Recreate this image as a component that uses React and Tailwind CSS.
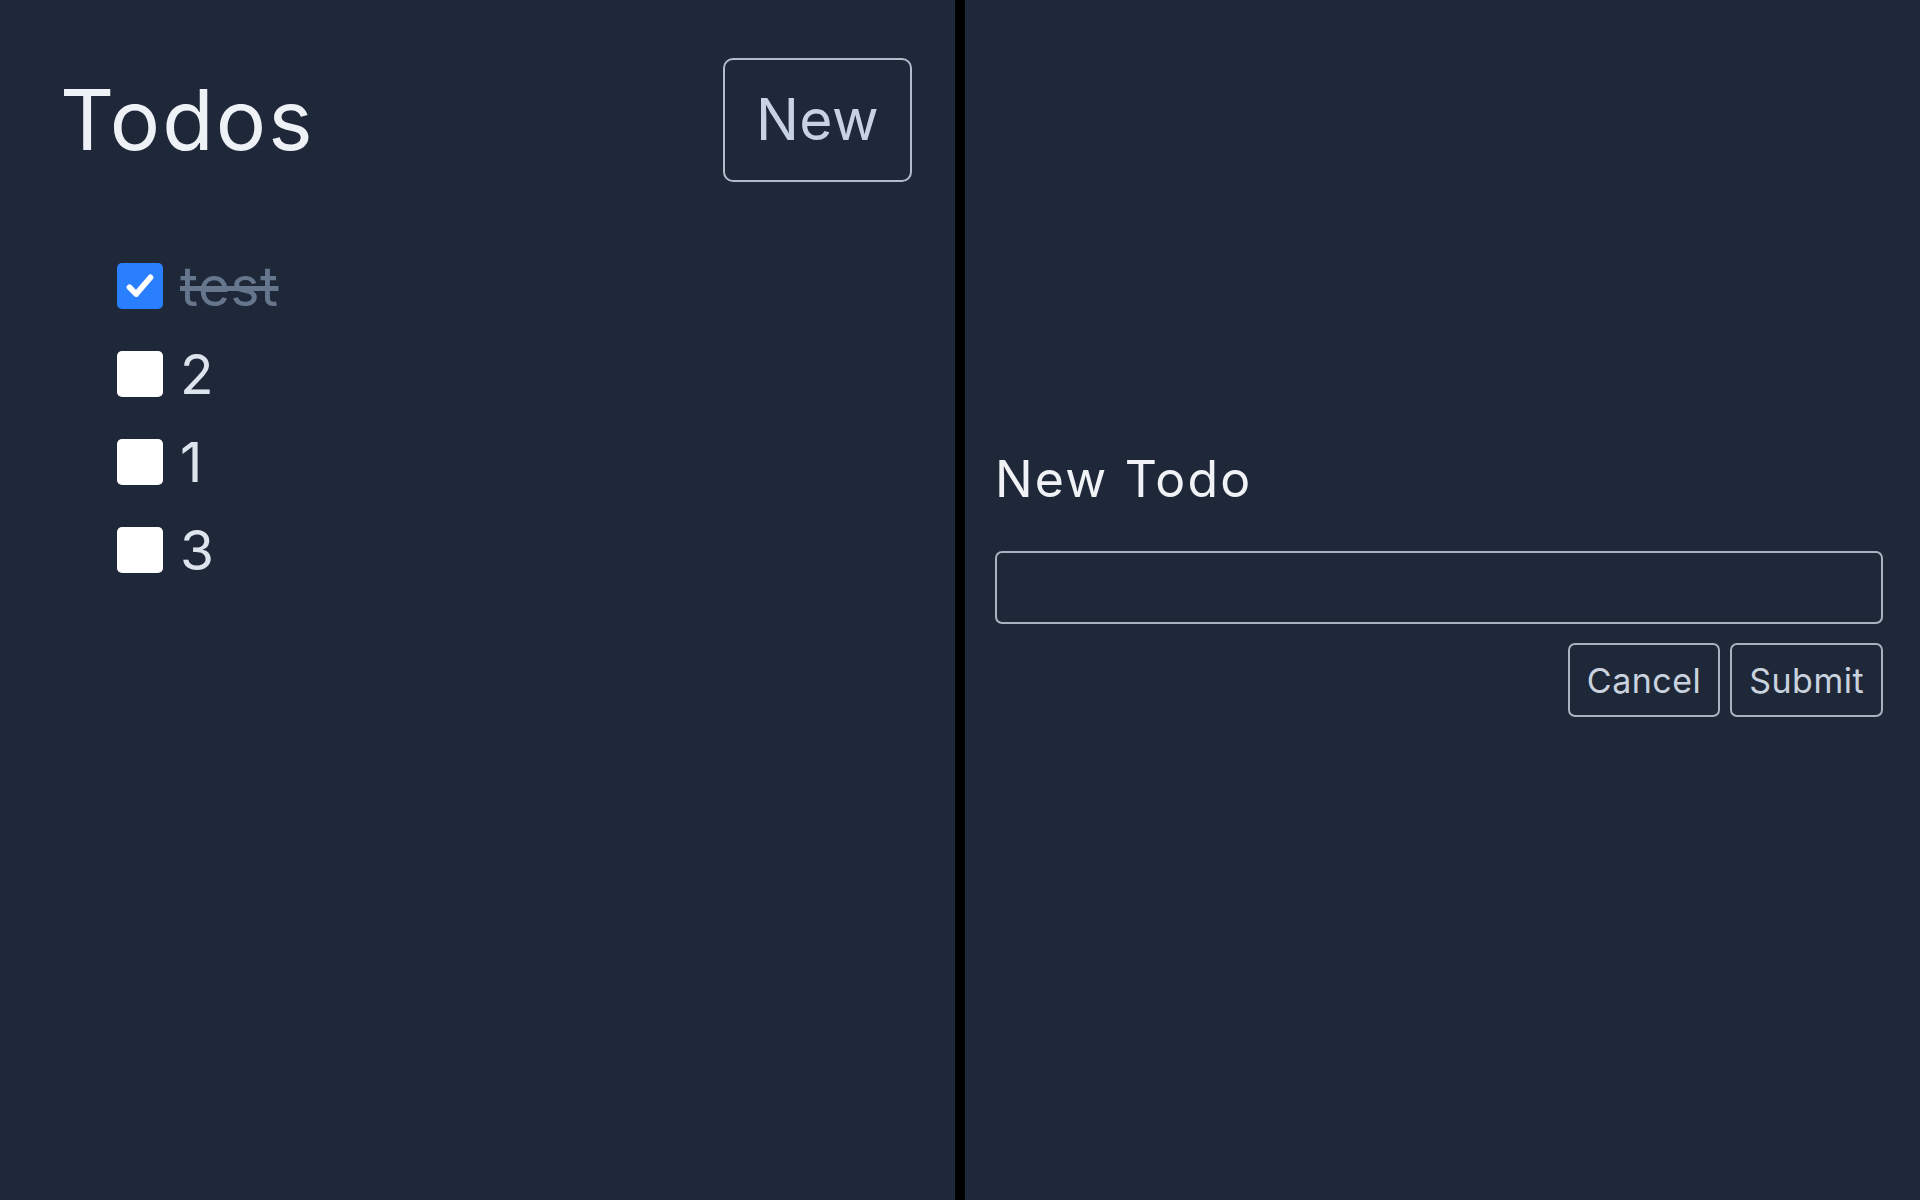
// Todos split view: list on the left, new-todo form on the right.

const todos = [
  { id: 1, label: 'test', done: true },
  { id: 2, label: '2', done: false },
  { id: 3, label: '1', done: false },
  { id: 4, label: '3', done: false },
]

function Box({ checked }) {
  if (checked) {
    return (
      <span className="flex items-center justify-center w-[46px] h-[46px] rounded-[5px] bg-[#2a7fff] flex-shrink-0">
        <svg width="36" height="36" viewBox="0 0 24 24" fill="none" stroke="#ffffff" strokeWidth="3.8" strokeLinecap="round" strokeLinejoin="round">
          <path d="M5 12.8l4.4 4.6L19 6.2" />
        </svg>
      </span>
    )
  }
  return <span className="block w-[46px] h-[46px] rounded-[5px] bg-white flex-shrink-0" />
}

export default function App() {
  return (
    <div className="flex w-full h-screen bg-[#1f2839] font-['Inter','Liberation_Sans',sans-serif] tracking-[0.03em]">
      {/* ── Left: todo list ── */}
      <div className="w-[955px] flex-shrink-0 pt-[58px] pl-[60px] pr-[43px]">
        <div className="flex items-center justify-between">
          <h1 className="text-[84px] leading-none text-[#eef1f5] font-normal tracking-[0.025em]">Todos</h1>
          <button className="w-[189px] h-[124px] rounded-[10px] border-2 border-[#b3bccb] text-[57px] text-[#c7d2e2]">
            New
          </button>
        </div>

        <ul className="mt-[60px] pl-[57px]">
          {todos.map(t => (
            <li key={t.id} className="flex items-center gap-[17px] h-[88px]">
              <Box checked={t.done} />
              <span
                className={
                  t.done
                    ? 'text-[55px] leading-none text-[#66768c] line-through'
                    : 'text-[55px] leading-none text-[#dde4ee]'
                }
              >
                {t.label}
              </span>
            </li>
          ))}
        </ul>
      </div>

      {/* ── Divider ── */}
      <div className="w-[10px] flex-shrink-0 bg-black" />

      {/* ── Right: new todo form ── */}
      <div className="flex-1 flex flex-col justify-center pl-[30px] pr-[37px] pb-[34px]">
        <h2 className="text-[50px] leading-[60px] text-[#f0f2f6] font-normal tracking-[0.044em]">New Todo</h2>
        <input
          type="text"
          className="mt-[42px] w-full h-[73px] rounded-[7px] border-2 border-[#a9b2bf] bg-transparent px-4 text-[34px] text-[#e5e9ef] outline-none"
        />
        <div className="flex justify-end gap-[10px] mt-[19px]">
          <button className="h-[74px] px-[17px] rounded-[7px] border-2 border-[#a9b2bf] text-[34px] text-[#c9d2de]">
            Cancel
          </button>
          <button className="h-[74px] px-[17px] rounded-[7px] border-2 border-[#a9b2bf] text-[34px] text-[#c9d2de]">
            Submit
          </button>
        </div>
      </div>
    </div>
  )
}
